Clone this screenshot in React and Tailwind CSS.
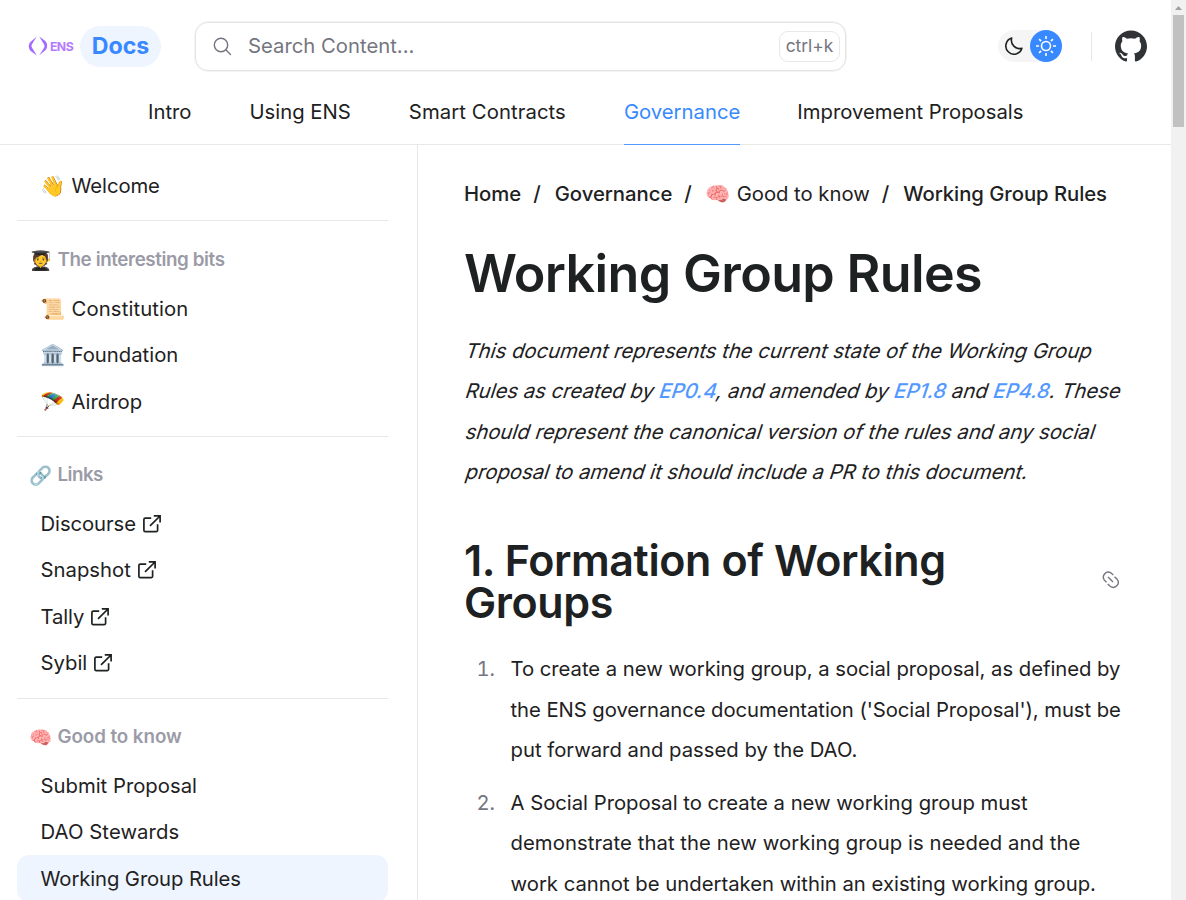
import React from "react";
import { SiGithub } from "react-icons/si";

const ExternalIcon = () => (
  <svg className="ml-[7px] size-[18px] shrink-0" viewBox="0 0 18 18" fill="none" stroke="#1e2122" strokeWidth="1.7" strokeLinejoin="round">
    <path d="M8.200 3.100H2.300a1.400 1.400 0 0 0-1.400 1.400v10.700a1.400 1.400 0 0 0 1.400 1.400h10.900a1.400 1.400 0 0 0 1.400-1.400V9.200" />
    <path d="M7 10.800 17 1M10.800.900h6.300v6.500" strokeLinejoin="miter" />
  </svg>
);

function Item({ emoji, external, active, wide = "", children }) {
  return (
    <a className={"flex h-[46.4px] items-center rounded-xl pl-[23.5px] " + (active ? "bg-[#eef5ff]" : "")}>
      {emoji && <span className="mr-[5px] w-[26px] whitespace-nowrap">{emoji}</span>}
      <span className={wide}>{children}</span>
      {external && <ExternalIcon />}
    </a>
  );
}

function Heading({ emoji, wide = "", faded, children }) {
  return (
    <div className="flex h-[30px] items-center pl-[12.5px] font-semibold text-[#9b9ba7]">
      <span className={"mr-[3px] w-[25px] whitespace-nowrap text-[18.6px] " + (faded ? "opacity-80" : "")}>{emoji}</span>
      <span className={"text-[18.8px] " + wide}>{children}</span>
    </div>
  );
}

const EpLink = ({ children }) => <a className="font-medium text-[#5298ff]">{children}</a>;

const Slanted = ({ wide = "", children }) => (
  <span className={"block w-max origin-[0_27px] -skew-x-[18deg] " + wide}>{children}</span>
);

function Header() {
  return (
    <header className="flex h-[145px] shrink-0 flex-col border-b border-[#e8e8e8]">
      <div className="flex h-[93px] items-center pl-7 pr-6">
        <svg className="h-5 w-5" viewBox="0 0 20 20" fill="#a06bff">
          <path d="M8.800.500 3.800 8.600C3.400 9.300 3.400 10.600 3.900 11.400L8.800 19.500 3 15.200C.300 12.600.200 8.700 2.200 6.200Z" />
          <path d="M11.200.500 16.100 8.600C16.600 9.400 16.600 10.700 16.200 11.400L11.200 19.500 17.800 13.800C19.800 11.300 19.700 7.400 17 4.800Z" />
        </svg>
        <span className="ml-[2px] w-[25px] pt-px text-[12.300px] font-bold tracking-[-0.600px] text-[#b67aff]">ENS</span>
        <span className="ml-[5px] flex h-[41px] w-[81px] items-center justify-center rounded-full bg-[#eef5ff] text-[23.200px] font-bold text-[#3889ff]">Docs</span>
        <div className="ml-[34px] flex h-[49px] w-[651px] items-center rounded-[13px] border border-[#e4e4e4] pl-[17px] pr-[5px] shadow-[0_0_0_0.5px_#e8e8e8]">
          <svg className="size-[19px]" viewBox="0 0 19 19" fill="none" stroke="#75757f" strokeWidth="1.4" strokeLinecap="round">
            <circle cx="8" cy="8" r="6.700" />
            <path d="m12.800 12.800 4.700 4.700" />
          </svg>
          <span className="ml-4 flex-1 text-[20.300px] text-[#75757f]">Search Content...</span>
          <kbd className="flex h-[31px] w-[61px] items-center justify-center rounded-[9px] border border-[#e8e8e8] font-[Inter] text-[17.400px] text-[#75757f]">ctrl+k</kbd>
        </div>
        <div className="ml-[152px] flex h-8 w-[64px] items-center justify-between rounded-full bg-[#f5f5f5] pl-[7px]">
          <svg className="size-[18px]" viewBox="0 0 18 18" fill="none" stroke="#1e2122" strokeWidth="1.600" strokeLinejoin="round">
            <path d="M6.700 1.100a8.200 8.200 0 1 0 10.200 10.200A8.300 8.300 0 0 1 6.700 1.100Z" />
          </svg>
          <span className="flex size-8 items-center justify-center rounded-full bg-[#3889ff]">
            <svg className="size-5" viewBox="0 0 20 20" fill="none" stroke="white" strokeWidth="1.600">
              <circle cx="10" cy="10" r="4.500" />
              <path d="M10 0v3M10 17v3M0 10h3M17 10h3M3.100 3.100l2 2M14.900 14.900l2 2M3.100 16.900l2-2M14.900 5.100l2-2" />
            </svg>
          </span>
        </div>
        <div className="ml-[29px] h-[29px] w-px bg-[#e8e8e8]" />
        <SiGithub className="ml-[23px] size-8 text-[#2f3336]" />
      </div>
      <nav className="flex h-[52px] pl-[148px] text-[20.300px]">
        <a className="mr-[58px] h-[53px] pt-[5px]">Intro</a>
        <a className="mr-[58px] h-[53px] pt-[5px]">Using ENS</a>
        <a className="mr-[58px] h-[53px] pt-[5px] tracking-[0.080px]">Smart Contracts</a>
        <a className="mr-[57px] h-[53px] shrink-0 border-b-[1.500px] border-[#5298ff] pt-[5px] text-[#3889ff]">Governance</a>
        <a className="h-[53px] pt-[5px]">Improvement Proposals</a>
      </nav>
    </header>
  );
}

export default function App() {
  return (
    <div className="flex h-[900px] w-[1186px] overflow-hidden bg-white font-[Inter,'Noto_Color_Emoji',sans-serif] text-[20.300px] leading-[30px] text-[#1e2122]">
      <div className="flex w-[1171px] shrink-0 flex-col">
        <Header />
        <div className="flex min-h-0 flex-1">
          <aside className="w-[418px] shrink-0 overflow-hidden border-r border-[#e8e8e8] pl-[17px] pr-[29px] pt-[18px]">
            <Item emoji="👋" wide="tracking-[-0.100px]">Welcome</Item>
            <div className="mb-[23.500px] mt-[11px] h-px bg-[#e8e8e8]" />
            <Heading emoji="🧑‍🎓" wide="tracking-[-0.400px]">The interesting bits</Heading>
            <div className="h-[11px]" />
            <Item emoji="📜" wide="tracking-[0.120px]">Constitution</Item>
            <Item emoji="🏛️">Foundation</Item>
            <Item emoji="🪂">Airdrop</Item>
            <div className="mb-[23px] mt-[11px] h-px bg-[#e8e8e8]" />
            <Heading emoji="🔗" wide="tracking-[-0.550px]" faded>Links</Heading>
            <div className="h-[10.700px]" />
            <Item external wide="tracking-[-0.080px]">Discourse</Item>
            <Item external>Snapshot</Item>
            <Item external wide="tracking-[-0.120px]">Tally</Item>
            <Item external>Sybil</Item>
            <div className="mb-[23px] mt-[11.700px] h-px bg-[#e8e8e8]" />
            <Heading emoji="🧠" wide="tracking-[-0.080px]">Good to know</Heading>
            <div className="h-[10.700px]" />
            <Item>Submit Proposal</Item>
            <Item wide="tracking-[0.080px]">DAO Stewards</Item>
            <Item active wide="tracking-[-0.110px]">Working Group Rules</Item>
          </aside>
          <main className="flex-1 overflow-hidden pl-[46px] pt-[34px]">
            <div className="flex whitespace-nowrap font-medium tracking-[-0.025px]">
              <span>Home</span>
              <span className="ml-3 mr-[14px]">/</span>
              <span>Governance</span>
              <span className="ml-3 mr-[14px]">/</span>
              <span className="font-normal">🧠 Good to know</span>
              <span className="ml-3 mr-[14px]">/</span>
              <span className="tracking-[-0.050px]">Working Group Rules</span>
            </div>
            <h1 className="mt-[35px] whitespace-nowrap text-[52px] font-semibold leading-[60px] tracking-[-0.650px]">Working Group Rules</h1>
            <p className="mt-[26.500px] whitespace-nowrap leading-[40.500px]">
              <Slanted>This document represents the current state of the Working Group</Slanted>
              <Slanted>Rules as created by <EpLink>EP0.4</EpLink>, and amended by <EpLink>EP1.8</EpLink> and <EpLink>EP4.8</EpLink>. These</Slanted>
              <Slanted>should represent the canonical version of the rules and any social</Slanted>
              <Slanted>proposal to amend it should include a PR to this document.</Slanted>
            </p>
            <div className="mt-[47.500px] flex w-[656px] items-center justify-between">
              <h2 className="whitespace-nowrap text-[43px] font-semibold leading-[41.500px] tracking-[-0.400px]">1. Formation of Working<br />Groups</h2>
              <svg className="mb-1 size-[19px]" viewBox="0 0 19 19" fill="none" stroke="#75757f" strokeWidth="1.400">
                <path d="M5.500 12.200 3.200 9.900A5 5 0 0 1 9.800 2.800l2.500 2.200M13.500 6.800l2.700 2.500a5 5 0 0 1-7 7l-2.500-2.400M7 7l5 5" />
              </svg>
            </div>
            <ol className="mt-[26px] whitespace-nowrap leading-[40.600px]">
              <li className="flex">
                <span className="w-[31px] text-right tabular-nums text-[#75757f]">1.</span>
                <span className="ml-[15.500px]">
                  <span className="tracking-[-0.035px]">To create a new working group, a social proposal, as defined by</span><br />
                  <span className="tracking-[-0.065px]">the ENS governance documentation ('Social Proposal'), must be</span><br />
                  put forward and passed by the DAO.
                </span>
              </li>
              <li className="mt-[12px] flex">
                <span className="w-[31px] text-right tabular-nums text-[#75757f]">2.</span>
                <span className="ml-[15.500px]">
                  <span className="tracking-[-0.020px]">A Social Proposal to create a new working group must</span><br />
                  <span className="tracking-[0.060px]">demonstrate that the new working group is needed and the</span><br />
                  work cannot be undertaken within an existing working group.
                </span>
              </li>
            </ol>
          </main>
        </div>
      </div>
      <div className="flex w-[15px] flex-col items-center bg-[#f1f1f1]">
        <svg className="h-[15px] w-[15px]" viewBox="0 0 15 15" fill="#a0a0a0"><path d="M4 10h7L7.500 6Z" /></svg>
        <div className="h-[112px] w-[11px] bg-[#c1c1c1]" />
      </div>
    </div>
  );
}
